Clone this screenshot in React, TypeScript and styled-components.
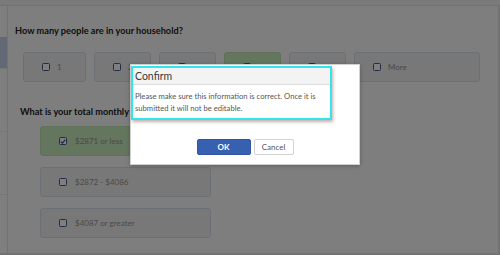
import React from 'react';
import styled, { createGlobalStyle } from 'styled-components';

const GlobalStyle = createGlobalStyle`
  html, body {
    margin: 0;
    padding: 0;
    background: #fdfdfd;
    font-family: Lato, "Open Sans", sans-serif;
  }
`;

const Screen = styled.div`
  position: relative;
  width: 500px;
  height: 255px;
  overflow: hidden;
  background: #fdfdfd;
  display: flex;
  flex-direction: column;
`;

const TopBar = styled.div`
  height: 5px;
  flex-shrink: 0;
  background: #f4f4f4;
  border-bottom: 1px solid #e2e2e2;
`;

const Body = styled.div`
  flex: 1;
  display: flex;
  border-right: 2px solid #e4e4e4;
  border-bottom: 2px solid #e4e4e4;
`;

const Sidebar = styled.div`
  width: 7px;
  flex-shrink: 0;
  border-right: 1px solid #e4e4e4;
  background: #ffffff;
  display: flex;
  flex-direction: column;
  padding-top: 31px;
`;

const SideItem = styled.div<{ $active?: boolean }>`
  height: ${p => (p.$active ? 31 : 62)}px;
  background: ${p => (p.$active ? '#c5d3ea' : 'transparent')};
  border-bottom: 1px solid #ececec;
`;

const Main = styled.main`
  flex: 1;
  padding: 18px 0 0 7px;
`;

const Question = styled.h2<{ $indent?: number; $gap?: number }>`
  margin: ${p => p.$gap || 0}px 0 0 ${p => p.$indent || 0}px;
  font-size: 9.2px;
  line-height: 14px;
  font-weight: 700;
  color: #222;
`;

const CountRow = styled.div`
  display: flex;
  gap: 8px;
  margin: 14px 0 0 8px;
`;

const Choice = styled.div<{ $w: number; $selected?: boolean }>`
  box-sizing: border-box;
  width: ${p => p.$w}px;
  height: 30px;
  display: flex;
  align-items: center;
  gap: 7px;
  padding-left: 18px;
  border: 1px solid ${p => (p.$selected ? '#bfe3b2' : '#d7e1ec')};
  border-radius: 3px;
  background: ${p => (p.$selected ? '#c9ecbb' : '#f1f1f1')};
  font-size: 8px;
  color: #949494;
`;

const Box = styled.span`
  box-sizing: border-box;
  width: 8px;
  height: 8px;
  border: 1px solid #44598a;
  border-radius: 1.5px;
  background: #fff;
  display: flex;
  align-items: center;
  justify-content: center;
`;

const IncomeList = styled.div`
  display: flex;
  flex-direction: column;
  gap: 11px;
  margin: 7px 0 0 25px;
`;

const IncomeChoice = styled(Choice)`
  gap: 8px;
`;

const Dim = styled.div`
  position: absolute;
  inset: 0;
  background: rgba(0, 0, 0, 0.5);
`;

const Modal = styled.div`
  position: absolute;
  left: 130px;
  top: 64px;
  width: 230px;
  height: 101px;
  box-sizing: border-box;
  background: #fff;
  border: 1px solid #d0d0d0;
  box-shadow: 0 1px 4px rgba(0, 0, 0, 0.25);
  display: flex;
  flex-direction: column;
`;

const Highlight = styled.div`
  margin-top: 1px;
  width: 201px;
  height: 54px;
  box-sizing: border-box;
  border: 2px solid #2fe6ea;
  box-shadow: 1px 2px 3px rgba(120, 80, 80, 0.45);
`;

const Header = styled.div`
  height: 16px;
  background: #f3f3f3;
  border-bottom: 1px solid #dcdcdc;
  padding-left: 2px;
  font-size: 10.5px;
  line-height: 17px;
  color: #3a3a3a;
`;

const Message = styled.p`
  margin: 0;
  padding: 5px 3px 0 2px;
  font-size: 7.65px;
  line-height: 12px;
  color: #555;
`;

const Footer = styled.div`
  display: flex;
  justify-content: center;
  gap: 3px;
  margin-top: 19px;
`;

const Button = styled.button<{ $primary?: boolean }>`
  box-sizing: border-box;
  height: 16px;
  width: ${p => (p.$primary ? 54 : 40)}px;
  padding: 0;
  border: 1px solid ${p => (p.$primary ? '#2f55a4' : '#d2d2d2')};
  border-radius: 2px;
  background: ${p => (p.$primary ? '#3760b0' : '#fff')};
  color: ${p => (p.$primary ? '#fff' : '#555')};
  font-family: Lato, sans-serif;
  font-size: 8px;
  font-weight: ${p => (p.$primary ? 700 : 400)};
`;

const Tick = () => (
  <svg width="7" height="7" viewBox="0 0 8 8">
    <path d="M1.2 4.2 L3.2 6.2 L7 1.6" fill="none" stroke="#2d4c8a" strokeWidth="1.5" />
  </svg>
);

const counts = [
  { label: '1', w: 63 },
  { label: '2', w: 57 },
  { label: '3', w: 57 },
  { label: '4', w: 57, selected: true },
  { label: '5', w: 57 },
  { label: 'More', w: 126 },
];

const incomes = [
  { label: '$2871 or less', selected: true },
  { label: '$2872 - $4086' },
  { label: '$4087 or greater' },
];

export default function App() {
  return (
    <>
      <GlobalStyle />
      <Screen>
        <TopBar />
        <Body>
          <Sidebar>
            <SideItem $active />
            <SideItem />
            <SideItem />
          </Sidebar>
          <Main>
            <Question>How many people are in your household?</Question>
            <CountRow>
              {counts.map(c => (
                <Choice key={c.label} $w={c.w} $selected={c.selected}>
                  <Box>{c.selected && <Tick />}</Box>
                  {c.label}
                </Choice>
              ))}
            </CountRow>
            <Question $indent={5} $gap={23}>
              What is your total monthly income?
            </Question>
            <IncomeList>
              {incomes.map(i => (
                <IncomeChoice key={i.label} $w={171} $selected={i.selected}>
                  <Box>{i.selected && <Tick />}</Box>
                  {i.label}
                </IncomeChoice>
              ))}
            </IncomeList>
          </Main>
        </Body>
        <Dim />
        <Modal>
          <Highlight>
            <Header>Confirm</Header>
            <Message>
              Please make sure this information is correct. Once it is submitted it will not be
              editable.
            </Message>
          </Highlight>
          <Footer>
            <Button $primary>OK</Button>
            <Button>Cancel</Button>
          </Footer>
        </Modal>
      </Screen>
    </>
  );
}
